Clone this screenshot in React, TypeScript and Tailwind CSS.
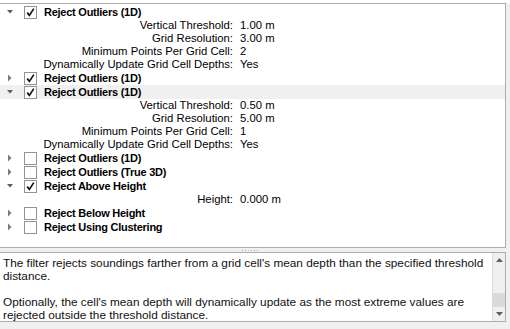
import React from 'react';

type Row =
  | { kind: 'item'; label: string; checked: boolean; expanded: boolean; selected?: boolean }
  | { kind: 'prop'; label: string; value: string };

const rows: Row[] = [
  { kind: 'item', label: 'Reject Outliers (1D)', checked: true, expanded: true },
  { kind: 'prop', label: 'Vertical Threshold:', value: '1.00 m' },
  { kind: 'prop', label: 'Grid Resolution:', value: '3.00 m' },
  { kind: 'prop', label: 'Minimum Points Per Grid Cell:', value: '2' },
  { kind: 'prop', label: 'Dynamically Update Grid Cell Depths:', value: 'Yes' },
  { kind: 'item', label: 'Reject Outliers (1D)', checked: true, expanded: false },
  { kind: 'item', label: 'Reject Outliers (1D)', checked: true, expanded: true, selected: true },
  { kind: 'prop', label: 'Vertical Threshold:', value: '0.50 m' },
  { kind: 'prop', label: 'Grid Resolution:', value: '5.00 m' },
  { kind: 'prop', label: 'Minimum Points Per Grid Cell:', value: '1' },
  { kind: 'prop', label: 'Dynamically Update Grid Cell Depths:', value: 'Yes' },
  { kind: 'item', label: 'Reject Outliers (1D)', checked: false, expanded: false },
  { kind: 'item', label: 'Reject Outliers (True 3D)', checked: false, expanded: false },
  { kind: 'item', label: 'Reject Above Height', checked: true, expanded: true },
  { kind: 'prop', label: 'Height:', value: '0.000 m' },
  { kind: 'item', label: 'Reject Below Height', checked: false, expanded: false },
  { kind: 'item', label: 'Reject Using Clustering', checked: false, expanded: false },
];

function Expander({ expanded }: { expanded: boolean }) {
  return (
    <svg width="24" height="14" viewBox="0 0 24 14" className="shrink-0">
      {expanded ? (
        <polygon points="7,5 13,5 10,8.5" fill="#5c5c5c" />
      ) : (
        <polygon points="8,3.5 8,10.5 11.5,7" fill="#7a7a7a" />
      )}
    </svg>
  );
}

function CheckBox({ checked }: { checked: boolean }) {
  return (
    <div className="w-[13px] h-[13px] shrink-0 border border-[#939393] bg-white flex items-center justify-center">
      {checked && (
        <svg width="11" height="11" viewBox="0 0 11 11">
          <path d="M2.2 5.6 L4.4 8.4 L8.8 1.6" fill="none" stroke="#111" strokeWidth="1.7" />
        </svg>
      )}
    </div>
  );
}

export default function App() {
  const font = { fontFamily: '"Liberation Sans", Arial, sans-serif' };
  return (
    <div className="w-[510px] h-[329px] bg-[#f0f0f0] flex flex-col overflow-hidden text-black" style={font}>
      <div className="h-[3px] bg-white shrink-0" />
      {/* tree panel */}
      <div className="h-[245px] shrink-0 mr-[4px] bg-white border-t border-b border-r border-[#adadad] pt-px">
        {rows.map((r, i) =>
          r.kind === 'item' ? (
            <div key={i} className={`h-[14px] flex items-center ${r.selected ? 'bg-[#f0f0f0]' : ''}`}>
              <Expander expanded={r.expanded} />
              <CheckBox checked={r.checked} />
              <span className="ml-[7px] font-bold text-[11px] tracking-[-0.25px] leading-[14px]">{r.label}</span>
            </div>
          ) : (
            <div key={i} className="h-[13px] flex items-center leading-[13px] text-[11.3px]">
              <span className="w-[233px] text-right shrink-0">{r.label}</span>
              <span className="ml-[7px]">{r.value}</span>
            </div>
          )
        )}
      </div>
      {/* splitter */}
      <div className="h-[4px] shrink-0 flex items-center justify-center">
        <div className="flex gap-[2px] -ml-[10px]">
          {[0, 1, 2, 3, 4, 5].map((d) => (
            <div key={d} className="w-px h-px bg-[#a8a8a8]" />
          ))}
        </div>
      </div>
      {/* description panel */}
      <div className="h-[70px] shrink-0 mr-[4px] bg-white border-t border-b border-r border-[#adadad] flex">
        <div className="flex-1 overflow-hidden pl-[3px] pt-[4px] leading-[13px] text-[11.8px] text-[#101010]">
          <p>The filter rejects soundings farther from a grid cell's mean depth than the specified threshold distance.</p>
          <p className="mt-[13px]">Optionally, the cell's mean depth will dynamically update as the most extreme values are rejected outside the threshold distance.</p>
        </div>
        <div className="w-[13px] shrink-0 bg-[#f0f0f0] border-l border-[#dcdcdc] flex flex-col">
          <div className="h-[14px] flex items-center justify-center">
            <svg width="7" height="4" viewBox="0 0 7 4"><polygon points="0,4 7,4 3.5,0" fill="#606060" /></svg>
          </div>
          <div className="flex-1 flex flex-col">
            <div className="flex-1" />
            <div className="h-[14px] bg-[#dadada]" />
          </div>
          <div className="h-[14px] flex items-center justify-center">
            <svg width="7" height="4" viewBox="0 0 7 4"><polygon points="0,0 7,0 3.5,4" fill="#606060" /></svg>
          </div>
        </div>
      </div>
    </div>
  );
}
